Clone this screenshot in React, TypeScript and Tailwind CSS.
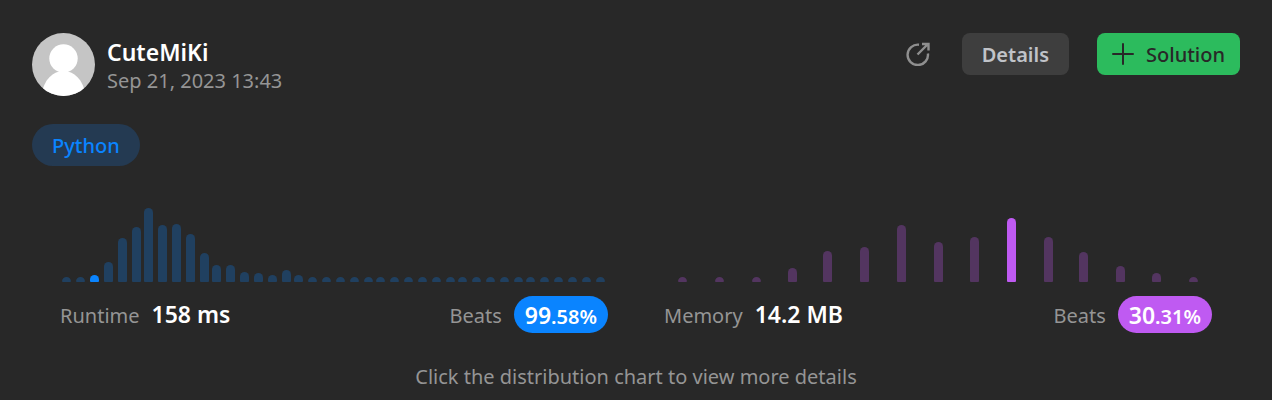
import React from "react";

type Bar = { x: number; h: number; active?: boolean };

const runtimeBars: Bar[] = [
  { x: 2, h: 5 },
  { x: 16, h: 5 },
  { x: 30, h: 7, active: true },
  { x: 44, h: 20 },
  { x: 58, h: 44 },
  { x: 72, h: 55 },
  { x: 84, h: 74 },
  { x: 98, h: 57 },
  { x: 112, h: 58 },
  { x: 126, h: 48 },
  { x: 140, h: 29 },
  { x: 152, h: 17 },
  { x: 166, h: 17 },
  { x: 180, h: 10 },
  { x: 194, h: 9 },
  { x: 208, h: 7 },
  { x: 222, h: 12 },
  { x: 234, h: 7 },
  ...[
    248, 262, 276, 290, 304, 316, 330, 344, 358, 372, 386, 398, 412, 426, 440,
    454, 466, 480, 494, 508, 522, 536,
  ].map((x) => ({ x, h: 5 })),
];

const memoryBars: Bar[] = [
  { x: 14, h: 5 },
  { x: 51, h: 5 },
  { x: 88, h: 5 },
  { x: 124, h: 14 },
  { x: 159, h: 31 },
  { x: 196, h: 35 },
  { x: 233, h: 57 },
  { x: 270, h: 40 },
  { x: 306, h: 45 },
  { x: 343, h: 64, active: true },
  { x: 380, h: 45 },
  { x: 415, h: 30 },
  { x: 452, h: 16 },
  { x: 488, h: 9 },
  { x: 525, h: 5 },
];

function Chart({ bars, muted, strong, label }: { bars: Bar[]; muted: string; strong: string; label: string }) {
  return (
    <svg viewBox="0 0 548 80" className="block w-full" role="img" aria-label={label}>
      {bars.map((b) => {
        const top = 80 - b.h;
        const ry = Math.min(b.h, 4.5);
        return (
          <path
            key={b.x}
            fill={b.active ? strong : muted}
            d={`M${b.x} ${top + ry}a4.5 ${ry} 0 0 1 9 0V79q0 1 -1 1h-7q-1 0 -1 -1z`}
          />
        );
      })}
    </svg>
  );
}

type StatProps = {
  name: string;
  value: string;
  whole: string;
  fraction: string;
  badge: string;
  bars: Bar[];
  muted: string;
  strong: string;
};

function Stat({ name, value, whole, fraction, badge, bars, muted, strong }: StatProps) {
  return (
    <section className="px-7">
      <Chart bars={bars} muted={muted} strong={strong} label={`${name} distribution`} />
      <div className="mt-3.5 flex items-center justify-between">
        <div className="flex items-baseline gap-3">
          <span>{name}</span>
          <span className="text-[23px] font-semibold text-white">{value}</span>
        </div>
        <div className="flex items-center gap-3">
          <span className="pt-0.5">Beats</span>
          <span className={`flex h-[37px] items-center rounded-full px-[11px] pt-0.5 text-white ${badge}`}>
            <span className="font-semibold">
              <span className="text-[23px]">{whole}</span>
              {fraction}
            </span>
          </span>
        </div>
      </div>
    </section>
  );
}

export default function App() {
  return (
    <main className="min-h-screen bg-[#282828] px-8 pt-[33px] font-['Noto_Sans',sans-serif] text-[20px] leading-7 text-[#959595]">
      <header className="flex items-start justify-between">
        <div className="flex items-center gap-3">
          <svg viewBox="0 0 63 63" className="size-[63px] rounded-full" role="img" aria-label="Avatar">
            <rect width="63" height="63" fill="#c5c5c5" />
            <circle cx="31.5" cy="25.5" r="14.2" fill="#fff" />
            <path d="M9 63C12 46 21 38 31.5 38S51 46 54 63z" fill="#fff" />
          </svg>
          <div className="pt-0.5">
            <h1 className="text-[23px] leading-[30px] font-semibold text-white">CuteMiKi</h1>
            <p>Sep 21, 2023 13:43</p>
          </div>
        </div>
        <div className="flex items-center gap-7">
          <button type="button" aria-label="Share" className="p-1">
            <svg viewBox="0 0 24 24" className="size-6" fill="none" stroke="#8f8f8f" strokeWidth="2.4">
              <path d="M13 2.700A10.200 10.200 0 1 0 21.900 11.500" />
              <path d="M11.500 12.500 21.500 2.500M16 2H22.500V8.500" />
            </svg>
          </button>
          <button type="button" className="h-[42px] rounded-lg bg-[#3e3e3e] px-5 pt-0.5 font-semibold text-[#c0c3c8]">
            Details
          </button>
          <button type="button" className="flex h-[42px] items-center gap-3 rounded-lg bg-[#2cbb5d] px-[15px] font-medium text-[#282828]">
            <svg viewBox="0 0 22 22" className="size-[22px]" stroke="currentColor" strokeWidth="2" strokeLinecap="round">
              <path d="M11 1v20M1 11h20" />
            </svg>
            <span className="pt-0.5">Solution</span>
          </button>
        </div>
      </header>
      <a href="#python" className="mt-7 inline-flex h-[42px] items-center rounded-full bg-[#243a52] px-5 pt-0.5 font-medium text-[#0a84ff]">
        Python
      </a>
      <div className="mt-9 grid grid-cols-2">
        <Stat name="Runtime" value="158 ms" whole="99" fraction=".58%" badge="bg-[#0a84ff]" bars={runtimeBars} muted="#204060" strong="#0a84ff" />
        <Stat name="Memory" value="14.2 MB" whole="30" fraction=".31%" badge="bg-[#bf5af2]" bars={memoryBars} muted="#533560" strong="#bf5af2" />
      </div>
      <p className="mt-[30px] text-center">Click the distribution chart to view more details</p>
    </main>
  );
}
